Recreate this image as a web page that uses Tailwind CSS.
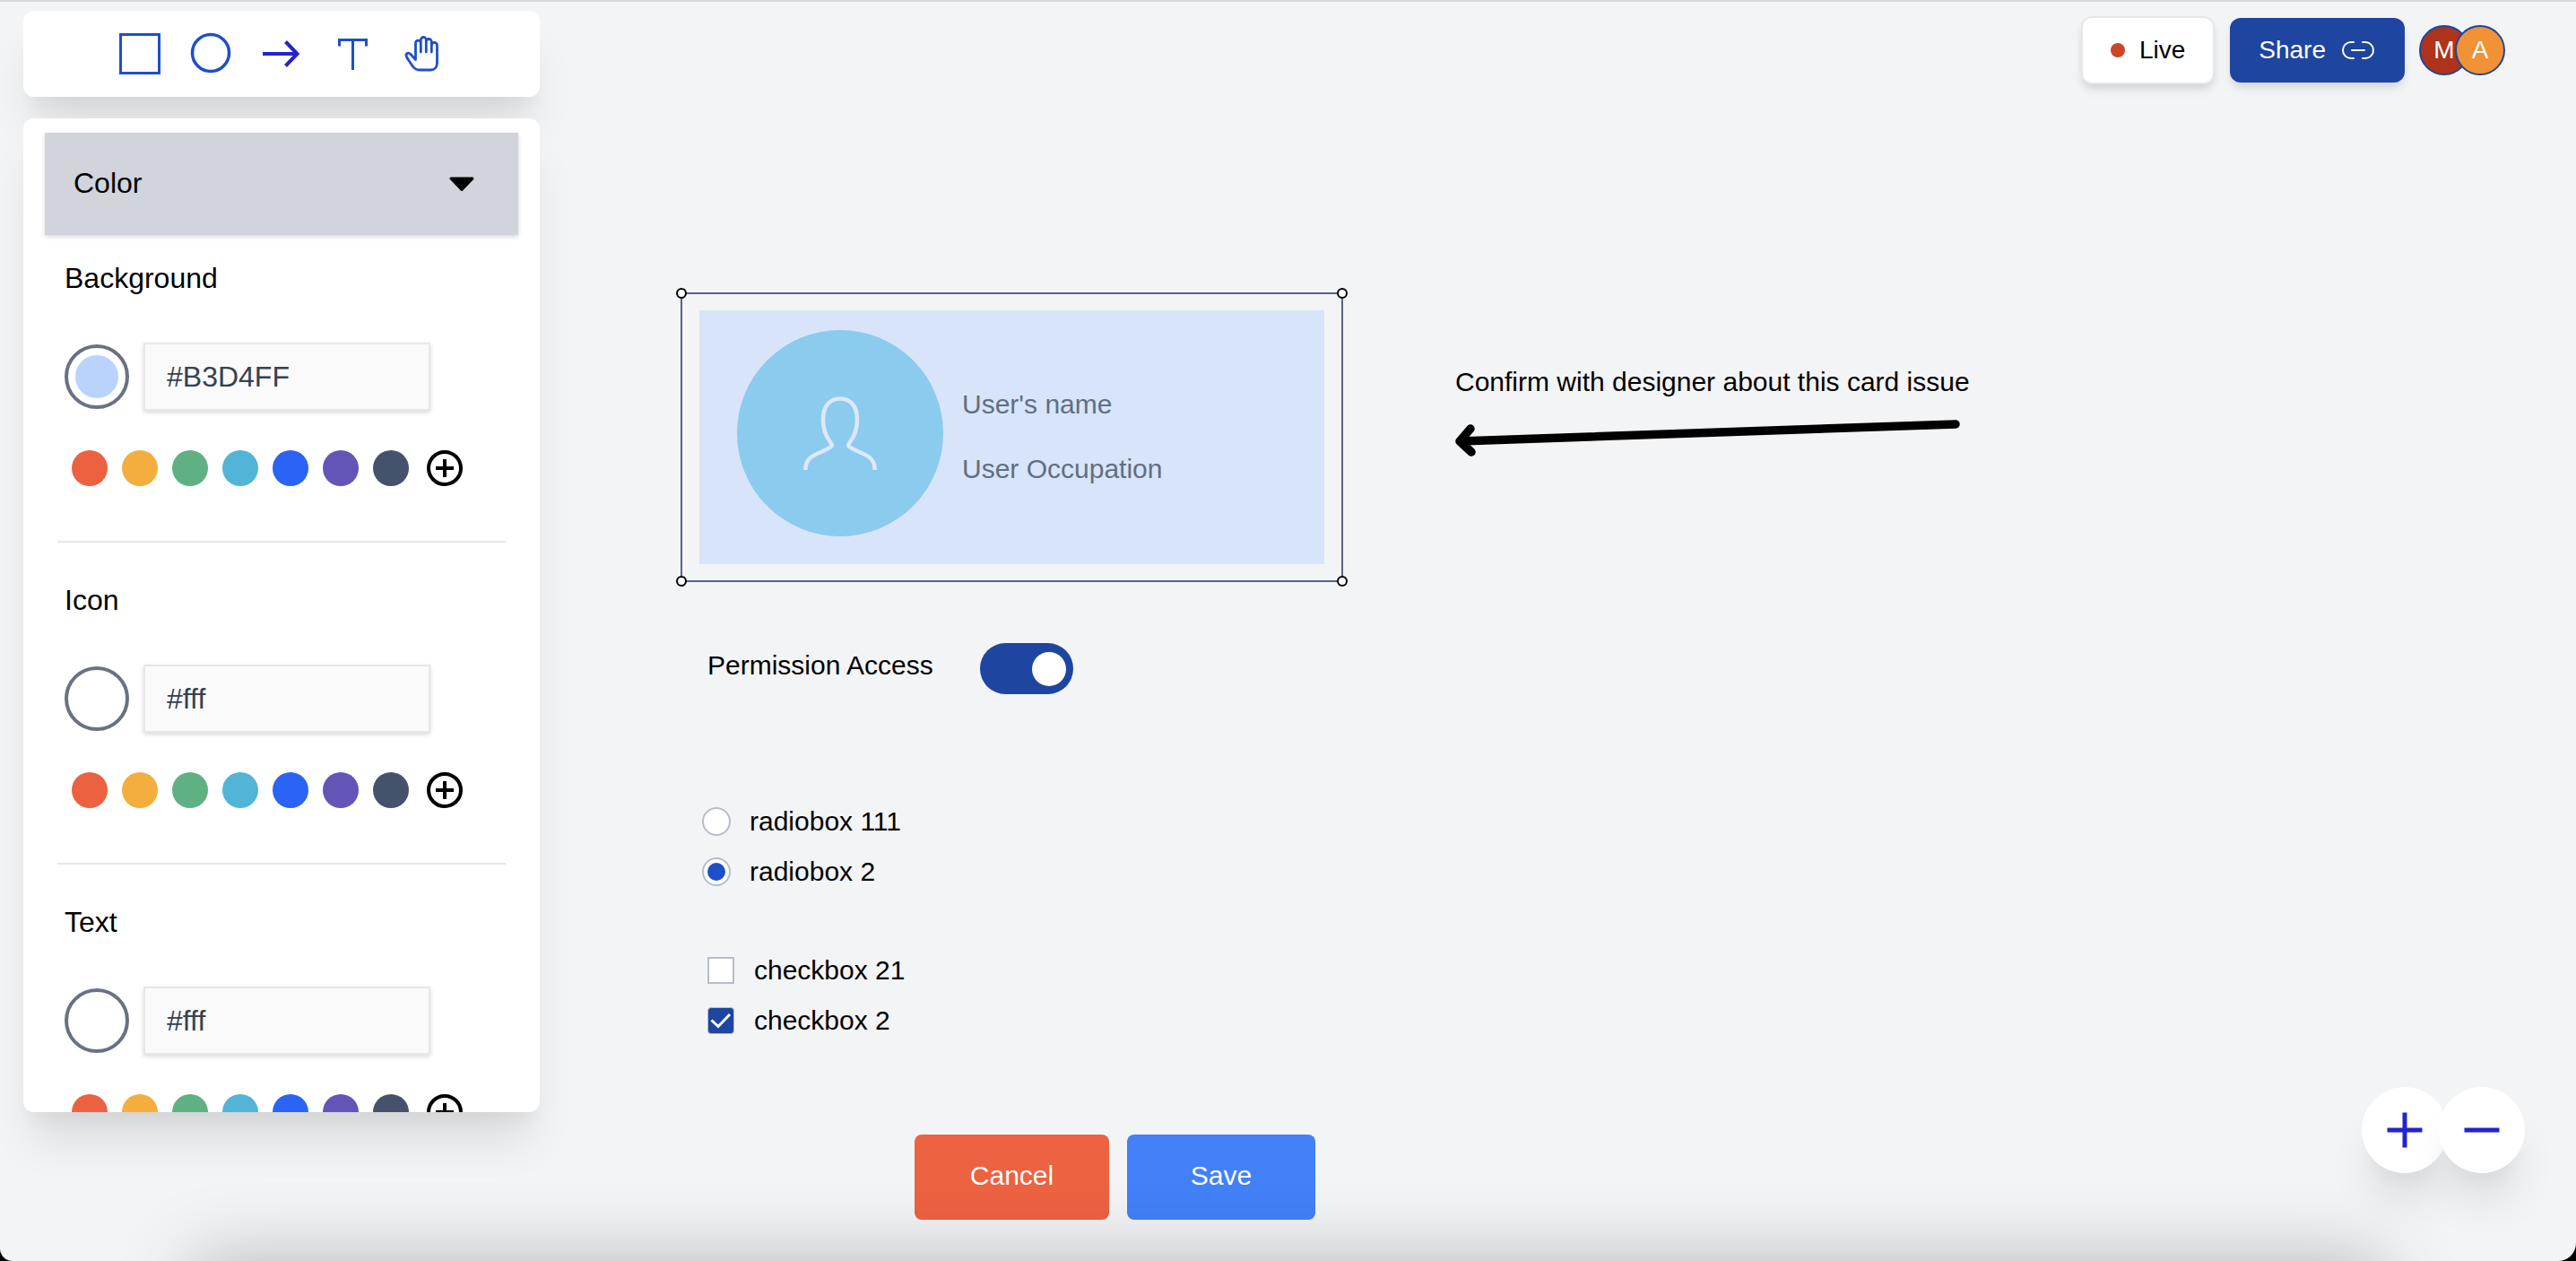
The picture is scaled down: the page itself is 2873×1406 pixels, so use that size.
<!DOCTYPE html>
<html lang="en" class="bg-black">
<head>
<meta charset="utf-8">
<title>Design board</title>
<script src="https://cdn.jsdelivr.net/npm/@tailwindcss/browser@4"></script>
</head>
<body class="bg-black font-['Liberation_Sans',Arial,sans-serif] text-black">
<div class="relative flex h-screen overflow-hidden rounded-bl-[14px] rounded-br-[20px] border-t-2 border-[#d9dadc] bg-[#f3f4f6]">

  <aside class="flex w-[602px] shrink-0 flex-col gap-6 pt-[10px] pb-[166px] pl-[26px]">
    <!-- Tools -->
    <nav aria-label="Tools" class="flex h-24 shrink-0 items-center justify-center gap-[31px] rounded-xl bg-white text-[#1f4fc8] shadow-[0_40px_50px_-10px_rgb(0_0_0/0.1),0_20px_20px_-10px_rgb(0_0_0/0.04)]">
      <button aria-label="Rectangle" class="size-12"><svg viewBox="0 0 48 48" fill="none" stroke="currentColor" stroke-width="3"><rect x="2.5" y="2.5" width="43" height="43"/></svg></button>
      <button aria-label="Ellipse" class="size-12"><svg viewBox="0 0 48 48" fill="none" stroke="currentColor" stroke-width="3.500"><circle cx="24" cy="23" r="20.500"/></svg></button>
      <button aria-label="Arrow" class="size-12"><svg viewBox="0 0 48 48" fill="none" stroke="#2323d0" stroke-width="4"><path d="M3 24H42M28.500 10.500L41.500 24L28.500 37.500"/></svg></button>
      <button aria-label="Text" class="size-12"><svg viewBox="0 0 48 48" fill="none" stroke="currentColor" stroke-width="3"><path d="M9.500 15.500V8.500H39.500V15.500M24.500 8.500V42"/></svg></button>
      <button aria-label="Pan" class="size-12"><svg viewBox="0 0 48 48" fill="none" stroke="currentColor" stroke-width="2.800" stroke-linejoin="round"><path d="M15.500 30.500V12.500a2.900 2.900 0 0 1 5.800-1V22V8.500a3 3 0 0 1 6 0V22V10.500a3 3 0 0 1 6 0V22V14.500a3.100 3.100 0 0 1 6.200 0V34c0 5-3 8-7 8H20c-3.500 0-6-1.500-8-4.500L6 28.500c-2.600-4.500 1-7 4-4z"/></svg></button>
    </nav>

    <!-- Properties -->
    <div class="min-h-0 flex-1 overflow-hidden rounded-xl bg-white px-6 pt-4 shadow-[0_40px_50px_-10px_rgb(0_0_0/0.1),0_20px_20px_-10px_rgb(0_0_0/0.04)]">
      <button class="flex h-[114px] w-full items-center justify-between bg-[#d1d4da] pr-[47px] pb-0.5 pl-8 text-[32px] leading-[48px] shadow-[0_2px_6px_rgb(0_0_0/0.1),0_2px_4px_rgb(0_0_0/0.06)]">
        Color
        <svg class="mt-0.5 h-5 w-8" viewBox="0 0 32 20"><path d="M4 4H28L16 16.500Z" stroke="#000" stroke-width="3" stroke-linejoin="round"/></svg>
      </button>
      <div id="sections"></div>
    </div>
  </aside>

  <main class="relative min-w-0 flex-1">
    <header class="flex items-start justify-end pt-4 pr-[79px] text-[28px] leading-[40px]">
      <button class="flex h-[76px] items-center gap-4 rounded-xl border-2 border-gray-200 bg-white px-[31px] shadow-[0_8px_12px_-2px_rgb(0_0_0/0.1),0_4px_8px_-2px_rgb(0_0_0/0.06)]"><span class="size-4 rounded-full bg-[#cb4526]"></span>Live</button>
      <button class="mt-0.5 ml-[17px] flex h-[72px] items-center gap-4 rounded-xl bg-[#1e459f] px-8 text-white shadow-[0_8px_12px_-2px_rgb(0_0_0/0.1),0_4px_8px_-2px_rgb(0_0_0/0.06)]">Share
        <svg class="h-6 w-10" viewBox="0 0 40 24" fill="none" stroke="#fff" stroke-width="2" stroke-linecap="round"><path d="M15 3H12a9 9 0 0 0 0 18H15M25 3H28a9 9 0 0 1 0 18H25M13 12H27"/></svg>
      </button>
      <div class="mt-2.5 ml-4 flex text-white">
        <span class="flex size-14 items-center justify-center rounded-full border-2 border-[#1e459f] bg-[#ae331b]">M</span>
        <span class="-ml-4 flex size-14 items-center justify-center rounded-full border-2 border-[#1e459f] bg-[#f09235]">A</span>
      </div>
    </header>

    <!-- Canvas objects -->
    <section aria-label="Canvas" class="text-[30px] leading-[40px]">
      <div class="absolute top-[324px] left-[157px] w-[739px] border-2 border-[#566580] px-[19px] py-[18px]">
        <div class="flex h-[283px] items-start gap-[21px] bg-[#d8e4f9] pt-[22px] pl-[42px]">
          <div class="flex size-[230px] items-center justify-center rounded-full bg-[#8bcbee]">
            <svg class="size-[82px]" viewBox="0 0 82 82" fill="none" stroke="#dce8fb" stroke-width="4.500"><path d="M2.300 82C2.300 64 18 65 31 56C35 52 22 49 22 26C22 9 31 2.500 41 2.500C51 2.500 60 9 60 26C60 49 47 52 51 56C64 65 79.700 64 79.700 82"/></svg>
          </div>
          <div class="flex flex-col gap-8 pt-[63px] text-[#5f6f84]">
            <p>User's name</p>
            <p>User Occupation</p>
          </div>
        </div>
        <span class="absolute -top-[7px] -left-[7px] size-3 rounded-full border-2 border-black bg-white"></span>
        <span class="absolute -top-[7px] -right-[7px] size-3 rounded-full border-2 border-black bg-white"></span>
        <span class="absolute -bottom-[7px] -left-[7px] size-3 rounded-full border-2 border-black bg-white"></span>
        <span class="absolute -right-[7px] -bottom-[7px] size-3 rounded-full border-2 border-black bg-white"></span>
      </div>

      <p class="absolute top-[404px] left-[1021px] whitespace-nowrap">Confirm with designer about this card issue</p>
      <svg class="absolute top-[462px] left-[1018px] h-[52px] w-[570px]" viewBox="0 0 570 52" fill="none" stroke="#000" stroke-width="9.500" stroke-linecap="round" stroke-linejoin="round"><path d="M561 9L8 28L20 14M8 28L21 40"/></svg>

      <div class="absolute top-[715px] left-[187px] flex items-start gap-[52px]">
        <label for="perm" class="pt-[5px] whitespace-nowrap">Permission Access</label>
        <input id="perm" type="checkbox" role="switch" checked class="flex h-[57px] w-[104px] appearance-none items-center rounded-full bg-[#1e459f] pl-[9px] before:size-[38px] before:rounded-full before:bg-white checked:justify-end checked:pr-2">
      </div>

      <div class="absolute top-[894px] left-[181px] flex flex-col gap-4">
        <label class="flex items-center gap-[21px]"><input type="radio" name="r" class="grid size-8 appearance-none place-items-center rounded-full border-2 border-[#b7bdc8] bg-white checked:before:size-5 checked:before:rounded-full checked:before:bg-[#1f4fc8]">radiobox 111</label>
        <label class="flex items-center gap-[21px]"><input type="radio" name="r" checked class="grid size-8 appearance-none place-items-center rounded-full border-2 border-[#b7bdc8] bg-white checked:before:size-5 checked:before:rounded-full checked:before:bg-[#1f4fc8]">radiobox 2</label>
      </div>

      <div class="absolute top-[1060px] left-[187px] flex flex-col gap-4">
        <label class="flex items-center gap-[22px]"><input type="checkbox" class="size-[30px] appearance-none border-2 border-[#b7bdc8] bg-white">checkbox 21</label>
        <label class="flex items-center gap-[22px]"><span class="relative size-[30px]"><input type="checkbox" checked class="block size-full appearance-none rounded-sm border border-[#b7bdc8] bg-[#1e459f]"><svg class="pointer-events-none absolute inset-0" viewBox="0 0 30 30" fill="none" stroke="#fff" stroke-width="3"><path d="M4.500 14.500L12 21.500L25 8"/></svg></span>checkbox 2</label>
      </div>

      <div class="absolute top-[1263px] left-[418px] flex gap-5 text-white">
        <button class="h-[95px] w-[217px] rounded-lg bg-[#ed6240] pb-1">Cancel</button>
        <button class="h-[95px] w-[210px] rounded-lg bg-[#4281f8] pb-1">Save</button>
      </div>
    </section>

    <div class="absolute right-[57px] bottom-[98px] flex">
      <button aria-label="Zoom in" class="flex size-24 items-center justify-center rounded-full bg-white shadow-[0_40px_50px_-10px_rgb(0_0_0/0.1),0_20px_20px_-10px_rgb(0_0_0/0.04)]"><svg class="size-10" viewBox="0 0 40 40" stroke="#2323d0" stroke-width="5"><path d="M.5 20H39.500M20 .5V39.500"/></svg></button>
      <button aria-label="Zoom out" class="-ml-2.5 flex size-24 items-center justify-center rounded-full bg-white shadow-[0_40px_50px_-10px_rgb(0_0_0/0.1),0_20px_20px_-10px_rgb(0_0_0/0.04)]"><svg class="size-10" viewBox="0 0 40 40" stroke="#2323d0" stroke-width="5"><path d="M.5 20H39.500"/></svg></button>
    </div>
  </main>

  <!-- Dock shadow along the bottom edge -->
  <div class="pointer-events-none absolute inset-x-[216px] top-full h-24 shadow-[0_0_84px_rgb(0_0_0/0.26)]"></div>
</div>

<script>
  const colors = ['#ec6240', '#f3ae3d', '#5fb183', '#52b4d6', '#2a63f6', '#6355b8', '#44526c'];
  const sections = [['Background', '#B3D4FF', '#b9d3fc'], ['Icon', '#fff', '#fff'], ['Text', '#fff', '#fff']];
  document.getElementById('sections').innerHTML = sections.map(([name, value, fill], i) => `
    <section class="mx-3.5 border-b-2 border-gray-200 pb-[61px] pl-2 ${i ? 'pt-10' : 'pt-6'}">
      <label for="c${i}" class="block text-[32px] leading-[48px]">${name}</label>
      <div class="mt-12 flex items-center gap-4">
        <span class="size-[72px] rounded-full border-4 border-gray-500 p-2"><span class="block size-full rounded-full" style="background:${fill}"></span></span>
        <input id="c${i}" value="${value}" class="h-[76px] w-80 border-2 border-gray-200 bg-[#fafafa] px-6 text-[32px] text-gray-700 shadow-[0_2px_6px_rgb(0_0_0/0.1),0_2px_4px_rgb(0_0_0/0.06)]">
      </div>
      <div class="mt-11 ml-2 flex gap-4">
        ${colors.map(c => `<button aria-label="${c}" class="size-10 rounded-full" style="background:${c}"></button>`).join('')}
        <button aria-label="Add colour" class="ml-1 size-10"><svg viewBox="0 0 40 40" fill="none" stroke="#000" stroke-width="4"><circle cx="20" cy="20" r="18"/><path d="M10 20H30M20 10V30"/></svg></button>
      </div>
    </section>`).join('');
</script>
</body>
</html>
